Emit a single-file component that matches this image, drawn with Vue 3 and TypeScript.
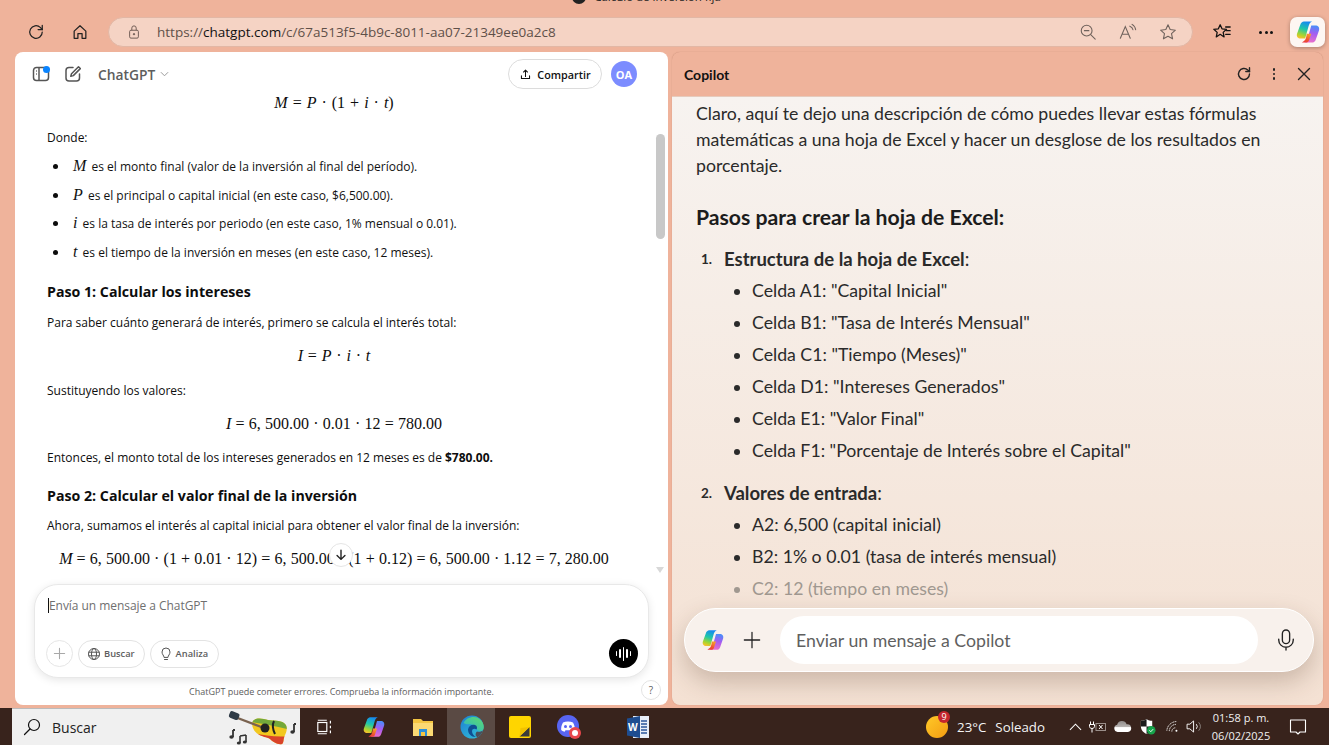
<script setup lang="ts">
interface Bullet {
  v: string
  text: string
}

const bullets: Bullet[] = [
  { v: 'M', text: 'es el monto final (valor de la inversión al final del período).' },
  { v: 'P', text: 'es el principal o capital inicial (en este caso, $6,500.00).' },
  { v: 'i', text: 'es la tasa de interés por periodo (en este caso, 1% mensual o 0.01).' },
  { v: 't', text: 'es el tiempo de la inversión en meses (en este caso, 12 meses).' }
]

const cells: string[] = [
  'Celda A1: "Capital Inicial"',
  'Celda B1: "Tasa de Interés Mensual"',
  'Celda C1: "Tiempo (Meses)"',
  'Celda D1: "Intereses Generados"',
  'Celda E1: "Valor Final"',
  'Celda F1: "Porcentaje de Interés sobre el Capital"'
]

const inputs: string[] = ['A2: 6,500 (capital inicial)', 'B2: 1% o 0.01 (tasa de interés mensual)']
</script>

<template>
  <div class="screen">
    <div class="titlebar"><span class="tab-dot"></span><span class="tab-title">Cálculo de inversión fija</span></div>

    <div class="toolbar">
      <svg class="tb-icon" viewBox="0 0 24 24" fill="none" stroke="#222" stroke-width="1.5" stroke-linecap="round"><path d="M19.5 12a7.5 7.5 0 1 1-2.4-5.5L19.5 9"/><path d="M19.5 4v5h-5"/></svg>
      <svg class="tb-icon" viewBox="0 0 24 24" fill="none" stroke="#222" stroke-width="1.5" stroke-linejoin="round"><path d="M5 11l7-6.5 7 6.5v8.5h-4.5V14h-5v5.500H5z"/></svg>
      <div class="address">
        <svg class="lock" viewBox="0 0 16 16" fill="none" stroke="#6d5a52" stroke-width="1.1"><rect x="3" y="6" width="10" height="9" rx="1.5"/><path d="M5.500 6V3.500a2.500 2.500 0 0 1 5 0V6"/><circle cx="8" cy="10.500" r=".8" fill="#6d5a52"/></svg>
        <span class="url"><span class="dim">https://</span>chatgpt.com<span class="dim">/c/67a513f5-4b9c-8011-aa07-21349ee0a2c8</span></span>
        <svg class="addr-icon" viewBox="0 0 20 20" fill="none" stroke="#6f625c" stroke-width="1.200" stroke-linecap="round"><circle cx="8.500" cy="8.500" r="6"/><path d="M6 8.500h5M13 13l5 5"/></svg>
        <svg class="addr-icon" viewBox="0 0 20 20" fill="none" stroke="#6f625c" stroke-width="1.200" stroke-linecap="round"><path d="M1.500 17L7 4l5.500 13M3.500 12.500h7"/><path d="M12 3.500a5 5 0 0 1 3.500 4M14.500 1.500a8 8 0 0 1 4 6"/></svg>
        <svg class="addr-icon" viewBox="0 0 20 20" fill="none" stroke="#6f625c" stroke-width="1.200" stroke-linejoin="round"><path d="M10 2l2.400 5.300 5.800.7-4.300 3.900 1.200 5.700L10 14.700 4.900 17.600l1.200-5.700L1.800 8l5.800-.7z"/></svg>
      </div>
      <svg class="fav" viewBox="0 0 22 22" fill="none" stroke="#111" stroke-width="1.400" stroke-linejoin="round" stroke-linecap="round"><path d="M9 3l2 4.500 5 .5-3.700 3.400 1 5L9 13.500 4.700 16.400l1-5L2 8l5-.5z"/><path d="M15 5.500h5M16 9.500h4M15 13.500h5"/></svg>
      <div class="more"><i></i><i></i><i></i></div>
      <div class="copilot-tile">
        <svg viewBox="0 0 32 32" class="cp-logo">
          <defs>
            <linearGradient id="cpa" x1="0.6" y1="0" x2="0.3" y2="1"><stop offset="0" stop-color="#1688f2"/><stop offset=".45" stop-color="#1fc8a8"/><stop offset=".8" stop-color="#a8d52f"/><stop offset="1" stop-color="#f7c02c"/></linearGradient>
            <linearGradient id="cpb" x1="0.6" y1="0" x2="0.4" y2="1"><stop offset="0" stop-color="#4a8df8"/><stop offset=".45" stop-color="#a45cf2"/><stop offset="1" stop-color="#ec6fc8"/></linearGradient>
            <linearGradient id="cpc" x1="0.8" y1="0" x2="0.2" y2="1"><stop offset="0" stop-color="#f7a52c"/><stop offset=".6" stop-color="#f0562f"/><stop offset="1" stop-color="#e9383f"/></linearGradient>
          </defs>
          <path fill="url(#cpa)" d="M11 3h10c-2.500 1-3.500 3-4.300 6L12.500 24H7C3.500 24 1.500 21.500 2.500 18L6.500 7C7.100 4.800 9 3 11 3z"/>
          <path fill="url(#cpb)" d="M21 29H11.500c2.500-1 3.500-3 4.300-6L20 8h5c3.500 0 5.500 2.500 4.500 6l-4 11.500C24.900 27.500 23 29 21 29z"/>
          <path fill="url(#cpc)" d="M14.500 18H20l-2.500 7.500C16.900 27.800 15.500 29 13.500 29H8.500l2.500-2c1.500-1 2.200-2.500 2.700-4.500z"/>
        </svg>
      </div>
    </div>

    <div class="panels">
      <section class="chat">
        <header class="chat-head">
          <svg class="head-icon" viewBox="0 0 20 20" fill="none" stroke="#555" stroke-width="1.500"><rect x="2.500" y="3.500" width="15" height="13" rx="3"/><path d="M8 3.500v13M5 7h.8M5 10h.8"/></svg>
          <span class="notify"></span>
          <svg class="head-icon" viewBox="0 0 20 20" fill="none" stroke="#555" stroke-width="1.500" stroke-linecap="round" stroke-linejoin="round"><path d="M10 3.500H6a3 3 0 0 0-3 3v7.500a3 3 0 0 0 3 3h7.500a3 3 0 0 0 3-3v-4"/><path d="M15.500 2.800l1.800 1.800-7 7-2.500.7.700-2.500z"/></svg>
          <span class="brand">ChatGPT</span>
          <svg class="caret" viewBox="0 0 10 6" fill="none" stroke="#9a9a9a" stroke-width="1.100"><path d="M1 1l4 4 4-4"/></svg>
          <span class="grow"></span>
          <button class="share">
            <svg viewBox="0 0 16 16" fill="none" stroke="#111" stroke-width="1.300" stroke-linecap="round" stroke-linejoin="round"><path d="M8 10.500V2.500M5.500 5L8 2.500 10.500 5M3 9.500v3.500h10V9.500"/></svg>
            Compartir
          </button>
          <span class="avatar">OA</span>
        </header>

        <div class="chat-body">
          <div class="scroll">
            <p class="math first"><i>M</i> = <i>P</i> · (1 + <i>i</i> · <i>t</i>)</p>
            <p class="para donde">Donde:</p>
            <ul class="vars">
              <li v-for="b in bullets" :key="b.v"><i class="mv">{{ b.v }}</i> {{ b.text }}</li>
            </ul>
            <h3 class="step s1">Paso 1: Calcular los intereses</h3>
            <p class="para a">Para saber cuánto generará de interés, primero se calcula el interés total:</p>
            <p class="math m2"><i>I</i> = <i>P</i> · <i>i</i> · <i>t</i></p>
            <p class="para b">Sustituyendo los valores:</p>
            <p class="math m3"><i>I</i> = 6, 500.00 · 0.01 · 12 = 780.00</p>
            <p class="para c">Entonces, el monto total de los intereses generados en 12 meses es de <b>$780.00.</b></p>
            <h3 class="step s2">Paso 2: Calcular el valor final de la inversión</h3>
            <p class="para d">Ahora, sumamos el interés al capital inicial para obtener el valor final de la inversión:</p>
            <p class="math m4"><i>M</i> = 6, 500.00 · (1 + 0.01 · 12) = 6, 500.00 · (1 + 0.12) = 6, 500.00 · 1.12 = 7, 280.00</p>
          </div>
          <button class="jump">
            <svg viewBox="0 0 16 16" fill="none" stroke="#222" stroke-width="1.600" stroke-linecap="round" stroke-linejoin="round"><path d="M8 2.500v10.500M3.500 8.500L8 13l4.500-4.500"/></svg>
          </button>
          <div class="scrollbar">
            <span class="arrow up"></span>
            <span class="thumb"></span>
            <span class="arrow down"></span>
          </div>
        </div>

        <div class="composer">
          <div class="placeholder"><span class="cursor"></span>Envía un mensaje a ChatGPT</div>
          <div class="composer-row">
            <span class="round-btn">
              <svg viewBox="0 0 14 14" fill="none" stroke="#a8a8a8" stroke-width="1.200" stroke-linecap="round"><path d="M7 1.500v11M1.500 7h11"/></svg>
            </span>
            <span class="pill">
              <svg viewBox="0 0 14 14" fill="none" stroke="#555" stroke-width="1"><circle cx="7" cy="7" r="5.500"/><ellipse cx="7" cy="7" rx="2.500" ry="5.500"/><path d="M1.500 5.200h11M1.500 8.800h11"/></svg>
              Buscar
            </span>
            <span class="pill">
              <svg viewBox="0 0 14 14" fill="none" stroke="#555" stroke-width="1" stroke-linecap="round"><path d="M5 10c0-1.500-2-2.500-2-5a4 4 0 0 1 8 0c0 2.500-2 3.500-2 5z"/><path d="M5.500 12.500h3"/></svg>
              Analiza
            </span>
            <span class="grow"></span>
            <span class="voice"><i></i><i></i><i></i><i></i><i></i></span>
          </div>
        </div>
        <div class="footnote">
          ChatGPT puede cometer errores. Comprueba la información importante.
          <span class="help">?</span>
        </div>
      </section>

      <section class="copilot">
        <header class="cp-head">
          <span class="cp-title">Copilot</span>
          <span class="grow"></span>
          <svg class="cp-act" viewBox="0 0 18 18" fill="none" stroke="#222" stroke-width="1.400" stroke-linecap="round"><path d="M14.500 9a5.500 5.500 0 1 1-1.700-4L14.500 6.500"/><path d="M14.500 2.800v3.700h-3.700"/></svg>
          <span class="kebab"><i></i><i></i><i></i></span>
          <svg class="cp-act" viewBox="0 0 18 18" fill="none" stroke="#222" stroke-width="1.400" stroke-linecap="round"><path d="M3.500 3.500l11 11M14.500 3.500l-11 11"/></svg>
        </header>
        <div class="cp-body">
          <p class="cp-intro">Claro, aquí te dejo una descripción de cómo puedes llevar estas fórmulas matemáticas a una hoja de Excel y hacer un desglose de los resultados en porcentaje.</p>
          <h2 class="cp-h2">Pasos para crear la hoja de Excel:</h2>
          <div class="cp-num"><span class="n">1.</span><b>Estructura de la hoja de Excel</b>:</div>
          <ul class="cp-list">
            <li v-for="c in cells" :key="c">{{ c }}</li>
          </ul>
          <div class="cp-num second"><span class="n">2.</span><b>Valores de entrada</b>:</div>
          <ul class="cp-list">
            <li v-for="c in inputs" :key="c">{{ c }}</li>
            <li class="faded">C2: 12 (tiempo en meses)</li>
          </ul>
          <div class="cp-composer">
            <svg viewBox="0 0 32 32" class="cp-logo small">
              <path fill="url(#cpa)" d="M11 3h10c-2.500 1-3.500 3-4.300 6L12.500 24H7C3.500 24 1.500 21.500 2.500 18L6.500 7C7.100 4.800 9 3 11 3z"/>
              <path fill="url(#cpb)" d="M21 29H11.500c2.500-1 3.500-3 4.300-6L20 8h5c3.500 0 5.500 2.500 4.500 6l-4 11.500C24.900 27.500 23 29 21 29z"/>
              <path fill="url(#cpc)" d="M14.500 18H20l-2.500 7.500C16.900 27.800 15.500 29 13.500 29H8.500l2.500-2c1.500-1 2.200-2.500 2.700-4.500z"/>
            </svg>
            <svg class="cp-plus" viewBox="0 0 20 20" fill="none" stroke="#222" stroke-width="1.400" stroke-linecap="round"><path d="M10 1.500v17M1.500 10h17"/></svg>
            <div class="cp-input">Enviar un mensaje a Copilot</div>
            <svg class="cp-mic" viewBox="0 0 22 26" fill="none" stroke="#222" stroke-width="1.500" stroke-linecap="round"><rect x="7" y="2" width="8" height="15" rx="4"/><path d="M3 12v1a8 8 0 0 0 16 0v-1M11 21v3"/></svg>
          </div>
        </div>
      </section>
    </div>

    <footer class="taskbar">
      <div class="tb-left"></div>
      <div class="search">
        <svg class="mag" viewBox="0 0 18 18" fill="none" stroke="#111" stroke-width="1.200" stroke-linecap="round"><circle cx="11" cy="7" r="5.500"/><path d="M7 11l-5.500 5.500"/></svg>
        <span class="search-text">Buscar</span>
        <svg class="guitar" viewBox="0 0 73 37">
          <defs>
            <clipPath id="gbody"><path d="M27 12c4-3 10-1 14 0 5 1 12 0 16 3 4 3 3 8 1 12-2 4-1 8-3 9-4 1-9-2-12-5-3-2-8-2-12-5-5-3-8-11-4-14z"/></clipPath>
          </defs>
          <g clip-path="url(#gbody)">
            <rect x="20" y="8" width="45" height="30" fill="#f2c81f"/>
            <path d="M24 8h40v14C50 18 36 16 24 14z" fill="#74a83b"/>
            <path d="M20 24c12 2 28 6 42 4v10H20z" fill="#d9432b"/>
          </g>
          <path d="M8 9l29 11" stroke="#7a6350" stroke-width="2.400"/>
          <rect x="2" y="4" width="10" height="7" rx="2" transform="rotate(22 7 8)" fill="#2f3b46"/>
          <circle cx="38" cy="20" r="4.500" fill="#222"/>
          <path d="M47 13c-2 4-1 9 1 13" stroke="#222" stroke-width="2" fill="none"/>
          <path d="M6 22v7M8 22l-2 0" stroke="#333" stroke-width="1.800" fill="none"/>
          <ellipse cx="4.500" cy="29" rx="2.200" ry="1.800" fill="#333"/>
          <path d="M13 28v7M19 27v7M13 28l6-1" stroke="#333" stroke-width="1.600" fill="none"/>
          <ellipse cx="11.800" cy="35" rx="2" ry="1.500" fill="#333"/>
          <ellipse cx="17.800" cy="34" rx="2" ry="1.500" fill="#333"/>
          <path d="M67 16v8M67 16l2 0" stroke="#333" stroke-width="1.800" fill="none"/>
          <ellipse cx="65.500" cy="24" rx="2.200" ry="1.800" fill="#333"/>
        </svg>
      </div>
      <div class="apps">
        <span class="app taskview">
          <svg viewBox="0 0 20 20" fill="none" stroke="#fff" stroke-width="1.300"><rect x="2" y="5" width="10" height="10"/><path d="M2 2.500h10M2 17.500h10M16 3v3M16 8.500v3M16 14v3"/></svg>
        </span>
        <span class="app">
          <svg viewBox="0 0 32 32" class="cp-logo task">
            <path fill="url(#cpa)" d="M11 3h10c-2.500 1-3.500 3-4.300 6L12.500 24H7C3.500 24 1.500 21.500 2.500 18L6.500 7C7.100 4.800 9 3 11 3z"/>
            <path fill="url(#cpb)" d="M21 29H11.500c2.500-1 3.500-3 4.300-6L20 8h5c3.500 0 5.500 2.500 4.500 6l-4 11.500C24.900 27.500 23 29 21 29z"/>
            <path fill="url(#cpc)" d="M14.500 18H20l-2.500 7.500C16.900 27.800 15.500 29 13.500 29H8.500l2.500-2c1.500-1 2.200-2.500 2.700-4.500z"/>
          </svg>
        </span>
        <span class="app">
          <svg viewBox="0 0 24 24"><path d="M2 4h8l2 2h10v15H2z" fill="#f4c542"/><path d="M2 8h20v13H2z" fill="#fbd973"/><path d="M8 14h8v7H8z" fill="#2b8fd8"/><path d="M10 17h4v4h-4z" fill="#f4c542"/></svg>
        </span>
        <span class="app edge">
          <svg viewBox="0 0 24 24">
            <defs>
              <linearGradient id="edg" x1="0" y1="0" x2="1" y2="1"><stop offset="0" stop-color="#1d7fd0"/><stop offset="1" stop-color="#34c3d9"/></linearGradient>
              <linearGradient id="edt" x1="0" y1="1" x2="1" y2="0"><stop offset="0" stop-color="#2bb5c8"/><stop offset="1" stop-color="#5fdc6a"/></linearGradient>
            </defs>
            <circle cx="12" cy="12" r="11.500" fill="url(#edg)"/>
            <path d="M3.500 8C6.500 2 16-.5 21 5.500c3.200 3.500 3.500 8 1.500 9.800-2 1.200-4.500.7-5.500-1-1-3-4-5-7-5-2.500 0-4.500 0-6.500-1.300z" fill="url(#edt)"/>
            <path d="M8 14.500c.5-3.500 4-5.500 7-4.500 2.200.8 2.500 3 1.500 4.500-1.300-1-3-1-4 0-1.200 2 0 5.500 3.500 7.500-4.500.3-8-3-8-7.500z" fill="#0f4f92"/>
            <path d="M17 16.500c2.200.7 4.300.2 6-1.200-.8 3-2.700 5.500-5.500 7-2-1-2.800-3.500-.5-5.800z" fill="#4a4f5c"/>
          </svg>
        </span>
        <span class="app sticky">
          <svg viewBox="0 0 22 24"><rect x="0" y="1" width="22" height="22" rx="2" fill="#ffd500"/><path d="M10.500 21.500L20.500 12v9.500z" fill="#3a3a3a"/><path d="M11.500 13l9-1-10 9.500z" fill="#f2c200"/></svg>
        </span>
        <span class="app discord">
          <svg viewBox="0 0 24 24"><circle cx="11" cy="11" r="11" fill="#5865f2"/><path d="M6 7.500c3-1.500 7-1.500 10 0 1.500 2.500 2 5 1.800 7.500-1.200 1-2.500 1.500-3.500 1.700l-.8-1.400H8.500l-.8 1.400c-1-.2-2.300-.7-3.500-1.700C4 12.500 4.500 10 6 7.500z" fill="#fff"/><circle cx="8.500" cy="11.500" r="1.500" fill="#5865f2"/><circle cx="13.500" cy="11.500" r="1.500" fill="#5865f2"/><circle cx="18" cy="18" r="6" fill="#e8474c"/><circle cx="18" cy="18" r="3" fill="#fff"/></svg>
        </span>
        <span class="app word">
          <svg viewBox="0 0 24 24"><path d="M7 1h16v22H7z" fill="#e8eef8"/><path d="M15 6h6M15 9h6M15 12h6M15 15h6M15 18h6" stroke="#2b579a" stroke-width="1.300"/><path d="M1 3.500L14 1v22L1 20.500z" fill="#1e4d91"/></svg>
          <span class="word-w">W</span>
        </span>
      </div>
      <span class="grow"></span>
      <div class="weather">
        <span class="sun"><span class="badge">9</span></span>
        <span class="temp">23°C</span>
        <span class="cond">Soleado</span>
      </div>
      <div class="tray">
        <svg class="t-chev" viewBox="0 0 14 8" fill="none" stroke="#fff" stroke-width="1.100"><path d="M1 7l6-6 6 6"/></svg>
        <svg class="t-batt" viewBox="0 0 18 14" fill="none" stroke="#fff" stroke-width="1"><path d="M1.500 1.500v3M4.500 1.500v3M.5 4.500h5v2c0 1-1 2-2.500 2s-2.500-1-2.500-2zM3 8.500v4"/><rect x="7" y="3.500" width="9.500" height="7" stroke="#9a8f8a"/><path d="M10 5l3.500 4M13.500 5L10 9"/></svg>
        <svg class="t-cloud" viewBox="0 0 20 12"><defs><linearGradient id="cld" x1="0" y1="0" x2="0" y2="1"><stop offset="0" stop-color="#8f8a88"/><stop offset=".55" stop-color="#b8b4b2"/><stop offset=".6" stop-color="#fff"/></linearGradient></defs><path d="M4 12a4 4 0 0 1-.5-7.900A5.500 5.500 0 0 1 14 3.500a4.300 4.300 0 0 1 1.500 8.500z" fill="url(#cld)"/></svg>
        <svg class="t-shield" viewBox="0 0 18 18"><path d="M8 1c2 1.500 4 2 6 2v6c0 4-3 6.500-6 8-3-1.500-6-4-6-8V3c2 0 4-.5 6-2z" fill="#fff"/><path d="M8 1v8H2V3c2 0 4-.5 6-2zM8 9h6c0 4-3 6.500-6 8z" fill="#1b1b1b"/><circle cx="13" cy="13" r="4.500" fill="#16a34a"/><path d="M11 13l1.500 1.500 2.500-2.700" stroke="#fff" fill="none"/></svg>
        <svg class="t-wifi" viewBox="0 0 18 14" fill="none" stroke="#fff" stroke-width="1.100"><path d="M1 12a12 12 0 0 1 12-11M4 12.500a8 8 0 0 1 8-8M7 13a4.500 4.500 0 0 1 4.500-4.500" stroke-dasharray="1.500 .7"/><circle cx="12.500" cy="12" r="1.200" fill="#fff" stroke="none"/></svg>
        <svg class="t-vol" viewBox="0 0 18 14" fill="none" stroke="#fff" stroke-width="1"><path d="M1 4.500h3L8 1v12L4 9.500H1z"/><path d="M11 4.500a4 4 0 0 1 0 5"/><path d="M13.500 2.500a7 7 0 0 1 0 9" stroke="#8f8884"/></svg>
      </div>
      <div class="clock"><span>01:58 p. m.</span><span>06/02/2025</span></div>
      <svg class="notif" viewBox="0 0 18 18" fill="none" stroke="#fff" stroke-width="1.100" stroke-linejoin="round"><path d="M1.500 2h15v12H11l-2 2-2-2H1.500z"/></svg>
    </footer>
  </div>
</template>

<style scoped>
.screen {
  width: 1329px;
  height: 745px;
  overflow: hidden;
  display: flex;
  flex-direction: column;
  background: #efb39b;
  font-family: "Open Sans", "Noto Sans", sans-serif;
  color: #111;
}

.grow {
  flex: 1;
}

/* title bar, cut off by the top of the capture */
.titlebar {
  height: 4px;
  display: flex;
  justify-content: center;
  align-items: flex-end;
  gap: 8px;
  overflow: hidden;
  padding-right: 36px;
}

.tab-dot {
  flex: none;
  width: 14px;
  height: 14px;
  border-radius: 50%;
  background: #222;
}

.tab-title {
  flex: none;
  font-size: 11.500px;
  line-height: 14px;
  color: #222;
}

.toolbar {
  height: 48px;
  flex: none;
  display: flex;
  align-items: center;
  padding: 8px 0 0 26px;
  box-sizing: border-box;
}

.tb-icon {
  width: 20px;
  height: 20px;
  margin-right: 24px;
}

.address {
  width: 1085px;
  height: 30px;
  margin-left: -6px;
  box-sizing: border-box;
  flex: none;
  display: flex;
  align-items: center;
  background: #f5d3c4;
  border: 1px solid #e2b7a5;
  border-radius: 15px;
  padding-left: 18px;
  padding-right: 15px;
}

.lock {
  width: 14px;
  height: 14px;
  margin-right: 16px;
}

.url {
  flex: 1;
  font-size: 13.500px;
  color: #111;
}

.dim {
  color: #5f5049;
}

.addr-icon {
  width: 18px;
  height: 18px;
  margin-left: 22px;
}

.fav {
  width: 20px;
  height: 20px;
  margin-left: 19px;
}

.more {
  display: flex;
  gap: 2.500px;
  margin-left: 27px;
}

.more i {
  width: 3px;
  height: 3px;
  border-radius: 50%;
  background: #111;
}

.copilot-tile {
  width: 35px;
  height: 30px;
  margin-left: 17px;
  background: #fdf6f2;
  border-radius: 7px;
  display: flex;
  align-items: center;
  justify-content: center;
  box-shadow: 0 1px 4px rgba(0, 0, 0, 0.3);
}

.cp-logo {
  width: 26px;
  height: 26px;
}

.cp-logo.small {
  width: 24px;
  height: 24px;
  margin-left: 16px;
  flex: none;
}

.cp-logo.task {
  width: 24px;
  height: 24px;
}

.panels {
  flex: 1;
  min-height: 0;
  display: flex;
  gap: 4px;
  padding: 0 6px 3px 15px;
}

/* left panel */
.chat {
  width: 653px;
  flex: none;
  background: #fff;
  border-radius: 8px;
  display: flex;
  flex-direction: column;
  overflow: hidden;
}

.chat-head {
  flex: none;
  height: 41px;
  box-sizing: border-box;
  display: flex;
  align-items: center;
  padding: 3px 31px 0 16px;
  position: relative;
}

.head-icon {
  width: 20px;
  height: 20px;
  margin-right: 12px;
}

.notify {
  position: absolute;
  left: 28px;
  top: 14px;
  width: 7px;
  height: 7px;
  border-radius: 50%;
  background: #0a84ff;
}

.brand {
  font-size: 13.800px;
  font-weight: 600;
  color: #5d5d5d;
  margin-left: 3px;
}

.caret {
  width: 9px;
  height: 6px;
  margin-left: 5px;
}

.share {
  height: 30px;
  width: 94px;
  margin-right: 9px;
  border: 1px solid #dcdcdc;
  border-radius: 15px;
  background: #fff;
  display: flex;
  align-items: center;
  justify-content: center;
  gap: 5px;
  font: 600 10.800px "Open Sans", sans-serif;
  color: #111;
  padding: 0;
}

.share svg {
  width: 13px;
  height: 13px;
}

.avatar {
  width: 26px;
  height: 26px;
  border-radius: 50%;
  background: #7c8cff;
  color: #fff;
  font-size: 11px;
  font-weight: 700;
  display: flex;
  align-items: center;
  justify-content: center;
}

.chat-body {
  flex: 1;
  min-height: 0;
  position: relative;
  overflow: hidden;
}

.scroll {
  padding: 0 0 0 32px;
  width: 574px;
}

.para {
  margin: 0;
  font-size: 12px;
  line-height: 17px;
  color: #0d0d0d;
}

.math {
  margin: 0;
  font-family: "Liberation Serif", "Times New Roman", serif;
  font-size: 16px;
  line-height: 20px;
  text-align: center;
  color: #0d0d0d;
  word-spacing: 1px;
}

.first {
  margin-top: 0;
}

.donde {
  margin-top: 16px;
}

.vars {
  list-style: none;
  margin: 12px 0 0;
  padding: 0 0 0 26px;
  font-size: 12px;
  line-height: 17px;
}

.vars li {
  margin-bottom: 11.670px;
  position: relative;
}

.vars li::before {
  content: "";
  position: absolute;
  left: -20px;
  top: 6px;
  width: 5px;
  height: 5px;
  border-radius: 50%;
  background: #0d0d0d;
}

.mv {
  font-family: "Liberation Serif", serif;
  font-size: 16px;
  line-height: 0;
  margin-right: 2px;
}

.step {
  margin: 21px 0 0;
  font-size: 14.200px;
  line-height: 20px;
  font-weight: 700;
  color: #0d0d0d;
}

.a { margin-top: 12px; }
.m2 { margin-top: 15px; word-spacing: 0.800px; }
.b { margin-top: 16px; }
.m3 { margin-top: 15px; word-spacing: 0.200px; }
.c { margin-top: 15px; }
.s2 { margin-top: 20px; }
.d { margin-top: 11px; }
.m4 { margin-top: 15px; word-spacing: 0.150px; white-space: nowrap; }

.jump {
  position: absolute;
  left: 314px;
  top: 450px;
  width: 24px;
  height: 24px;
  padding: 0;
  border-radius: 50%;
  border: 1px solid #e5e5e5;
  background: #fff;
  display: flex;
  align-items: center;
  justify-content: center;
}

.jump svg {
  width: 14px;
  height: 14px;
}

.scrollbar {
  position: absolute;
  left: 641px;
  top: 0;
  width: 9px;
  height: 100%;
}

.thumb {
  position: absolute;
  top: 41px;
  left: 0;
  width: 9px;
  height: 105px;
  background: #c8c8c8;
  border-radius: 5px;
}

.arrow {
  position: absolute;
  left: 0;
  width: 0;
  height: 0;
  border-left: 4px solid transparent;
  border-right: 4px solid transparent;
}

.arrow.up {
  top: -12px;
  border-bottom: 6px solid #d8d8d8;
}

.arrow.down {
  top: 474px;
  border-top: 6px solid #d8d8d8;
}

.composer {
  flex: none;
  width: 615px;
  height: 94px;
  box-sizing: border-box;
  margin: 0 0 0 19px;
  padding: 12px 10px 9px 11px;
  border: 1px solid #e8e8e8;
  border-radius: 24px;
  background: #fff;
  box-shadow: 0 2px 8px rgba(0, 0, 0, 0.1);
  display: flex;
  flex-direction: column;
  justify-content: space-between;
}

.placeholder {
  font-size: 12px;
  line-height: 18px;
  color: #6f6f6f;
  letter-spacing: -0.05px;
  padding-left: 2px;
}

.cursor {
  display: inline-block;
  width: 1px;
  height: 15px;
  background: #111;
  vertical-align: -3px;
}

.composer-row {
  display: flex;
  align-items: center;
  gap: 5px;
}

.round-btn {
  width: 27px;
  height: 27px;
  box-sizing: border-box;
  border: 1px solid #e6e6e6;
  border-radius: 50%;
  display: flex;
  align-items: center;
  justify-content: center;
}

.round-btn svg {
  width: 13px;
  height: 13px;
}

.pill {
  height: 28px;
  box-sizing: border-box;
  padding: 0 9px 0 8px;
  border: 1px solid #e3e3e3;
  border-radius: 14px;
  display: flex;
  align-items: center;
  gap: 3px;
  font-size: 9.300px;
  font-weight: 600;
  color: #5d5d5d;
}

.pill + .pill {
  padding-right: 10px;
}

.pill svg {
  width: 14px;
  height: 14px;
}

.voice {
  width: 29px;
  height: 29px;
  border-radius: 50%;
  background: #000;
  display: flex;
  align-items: center;
  justify-content: center;
  gap: 2px;
}

.voice i {
  width: 1.500px;
  height: 5px;
  background: #fff;
  border-radius: 1px;
}

.voice i:nth-child(2),
.voice i:nth-child(4) {
  height: 9px;
}

.voice i:nth-child(3) {
  height: 14px;
}

.footnote {
  flex: none;
  height: 27px;
  position: relative;
  display: flex;
  align-items: center;
  justify-content: center;
  font-size: 9px;
  color: #5d5d5d;
}

.help {
  position: absolute;
  right: 7px;
  top: 2px;
  width: 18px;
  height: 18px;
  border: 1px solid #e3e3e3;
  border-radius: 50%;
  display: flex;
  align-items: center;
  justify-content: center;
  font-size: 10px;
}

/* right panel */
.copilot {
  flex: 1;
  min-width: 0;
  border-radius: 8px;
  overflow: hidden;
  display: flex;
  flex-direction: column;
  background: #efb39b;
  box-shadow: 0 0 1px rgba(120, 70, 50, 0.4);
}

.cp-head {
  flex: none;
  height: 44px;
  display: flex;
  align-items: center;
  padding: 0 10px 0 12px;
  gap: 16px;
  border-bottom: 1px solid #e6cbbd;
}

.cp-title {
  font-family: Lato, sans-serif;
  font-size: 14px;
  font-weight: 700;
}

.cp-act {
  width: 18px;
  height: 18px;
}

.kebab {
  display: flex;
  flex-direction: column;
  gap: 2px;
  padding: 0 4px;
}

.kebab i {
  width: 2.500px;
  height: 2.500px;
  background: #222;
  border-radius: 50%;
}

.cp-body {
  flex: 1;
  min-height: 0;
  position: relative;
  overflow: hidden;
  background: linear-gradient(#f7f3f0, #f4e1d3);
  padding: 4px 24px 0;
  font-family: Lato, sans-serif;
  font-size: 17.700px;
  color: #2a2a2a;
}

.cp-intro {
  margin: 0;
  line-height: 26px;
}

.cp-h2 {
  margin: 25px 0 0;
  font-size: 21.200px;
  line-height: 26px;
  font-weight: 700;
  color: #1c1c1c;
}

.cp-num {
  margin-top: 16px;
  line-height: 26px;
  position: relative;
  padding-left: 28px;
  font-size: 18.500px;
}

.cp-num.second {
  margin-top: 13px;
}

.cp-num b {
  font-weight: 700;
}

.n {
  position: absolute;
  left: 5px;
  font-size: 13.500px;
  font-weight: 700;
}

.cp-list {
  margin: 3px 0 0;
  padding: 0 0 0 56px;
  list-style: disc;
}

.cp-list li {
  line-height: 32px;
}

.faded {
  color: #a09890;
}

.cp-composer {
  position: absolute;
  left: 12px;
  top: 511px;
  width: 630px;
  height: 64px;
  box-sizing: border-box;
  border: 1px solid #fff;
  border-radius: 32px;
  background: #f8f1ec;
  box-shadow: 0 10px 24px rgba(80, 50, 30, 0.25);
  display: flex;
  align-items: center;
}

.cp-plus {
  width: 18px;
  height: 18px;
  margin-left: 18px;
  flex: none;
}

.cp-input {
  width: 478px;
  height: 48px;
  margin-left: 19px;
  flex: none;
  box-sizing: border-box;
  background: #fff;
  border-radius: 24px;
  display: flex;
  align-items: center;
  padding-left: 16px;
  color: #5f5f5f;
}

.cp-mic {
  width: 20px;
  height: 24px;
  margin-left: 18px;
}

/* taskbar */
.taskbar {
  height: 37px;
  flex: none;
  display: flex;
  align-items: center;
  background: #38231c;
  color: #fff;
  font-family: "Open Sans", sans-serif;
}

.tb-left {
  width: 12px;
}

.search {
  width: 288px;
  height: 37px;
  flex: none;
  background: #f0f0f0;
  display: flex;
  align-items: center;
  position: relative;
  border-top: 1px solid #bbb;
  box-sizing: border-box;
}

.mag {
  width: 18px;
  height: 18px;
  margin-left: 11px;
}

.search-text {
  margin-left: 11px;
  font-size: 14px;
  color: #222;
  padding-top: 1px;
}

.guitar {
  position: absolute;
  left: 215px;
  top: -1px;
  width: 73px;
  height: 37px;
}

.apps {
  display: flex;
}

.app {
  width: 49px;
  height: 37px;
  display: flex;
  align-items: center;
  justify-content: center;
  position: relative;
}

.app svg {
  width: 24px;
  height: 24px;
}

.taskview svg {
  width: 18px;
  height: 18px;
}

.edge {
  background: #5a4a44;
  width: 48px;
}

.edge svg {
  margin-left: 1px;
}

.word {
  margin-left: 20px;
}

.word-w {
  position: absolute;
  left: 15px;
  top: 12px;
  font-size: 10px;
  font-weight: 700;
  color: #fff;
}

.weather {
  display: flex;
  align-items: center;
  font-size: 13.300px;
  color: #f4f4f4;
  margin-right: 24px;
}

.sun {
  width: 22px;
  height: 22px;
  border-radius: 50%;
  background: linear-gradient(135deg, #ffc928, #f39c12);
  position: relative;
  margin-right: 9px;
}

.badge {
  position: absolute;
  right: -2px;
  top: -5px;
  width: 12px;
  height: 12px;
  border-radius: 50%;
  background: #c4262e;
  font-size: 9px;
  line-height: 12px;
  text-align: center;
  color: #fff;
}

.cond {
  margin-left: 9px;
}

.tray {
  display: flex;
  align-items: center;
  gap: 7px;
  margin-right: 7px;
}

.t-chev { width: 13px; height: 8px; }
.t-batt { width: 18px; height: 14px; }
.t-cloud { width: 18px; height: 11px; }
.t-shield { width: 17px; height: 17px; }
.t-wifi { width: 15px; height: 13px; margin-left: 3px; }
.t-vol { width: 17px; height: 13px; margin-left: -2px; }

.clock {
  display: flex;
  flex-direction: column;
  align-items: center;
  font-size: 11px;
  line-height: 18px;
  color: #f0f0f0;
  width: 62px;
  margin-right: 17px;
}

.notif {
  width: 18px;
  height: 18px;
  margin-right: 22px;
}
</style>

<style>
html, body {
  margin: 0;
  overflow: hidden;
}
</style>
